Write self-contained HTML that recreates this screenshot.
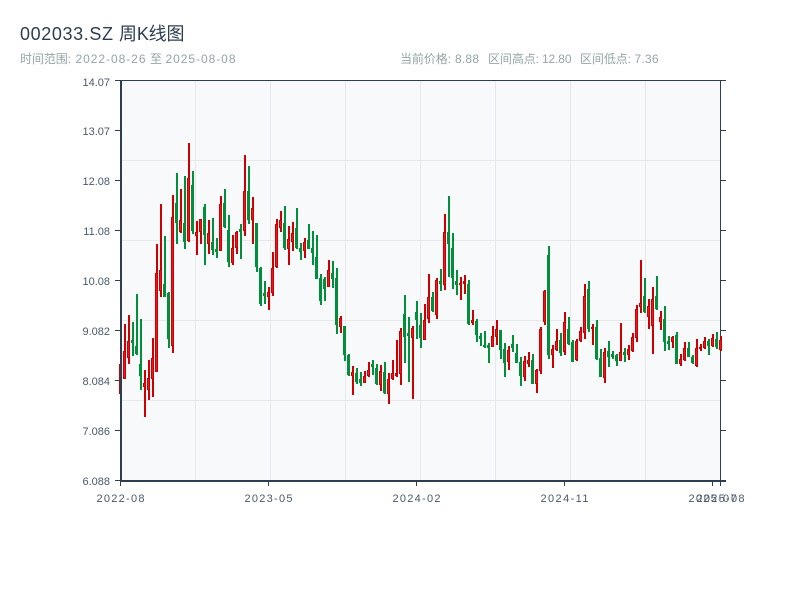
<!DOCTYPE html>
<html lang="zh">
<head>
<meta charset="utf-8">
<title>002033.SZ 周K线图</title>
<style>
html,body{margin:0;padding:0;background:#fff;width:800px;height:600px;overflow:hidden}
svg{display:block;position:absolute;left:0;top:0}
text{font-family:"Liberation Sans","Noto Sans CJK SC",sans-serif}
.s{font-size:12px;fill:#95a5a6}
.y{font-size:11px;fill:#4a5a6b;text-anchor:end}
.x{font-size:11px;fill:#4a5a6b;text-anchor:middle}
</style>
</head>
<body>
<svg width="800" height="600" viewBox="0 0 800 600" xmlns="http://www.w3.org/2000/svg">
<rect x="121" y="81" width="600" height="400" fill="#f8f9fa"/>
<path fill="none" stroke="#e6e8ec" stroke-width="1" d="M121 160.5H720M121 240.5H720M121 320.5H720M121 400.5H720M195.5 81V480M270.5 81V480M345.5 81V480M420.5 81V480M495.5 81V480M570.5 81V480M645.5 81V480"/>
<path fill="none" stroke="#2c3e50" stroke-width="1" d="M720.5 80V481M720 130.5H726M720 180.5H726M720 230.5H726M720 280.5H726M720 330.5H726M720 380.5H726M720 430.5H726"/>

<path fill="none" stroke="#cc0000" stroke-width="2" d="M121 364V394M125 324V379M129 315V364M145 370V417M149 360V400M153 338V397M157 244V372M161 204V297M173 195V353M181 189V233M189 143V242M197 221V255M201 219V244M209 220V254M221 196V251M233 235V265M237 231V254M245 155V236M253 197V244M269 287V310M273 252V296M277 219V268M281 211V232M289 226V265M293 222V251M305 238V258M329 260V287M341 316V333M353 366V395M365 371V383M369 362V377M381 365V391M389 373V404M393 360V380M397 340V377M401 328V385M413 326V399M425 304V340M429 274V323M437 278V319M445 214V290M461 277V300M465 275V294M473 310V325M493 326V347M497 320V345M509 346V370M525 356V381M529 352V367M537 369V393M541 327V374M545 290V325M553 345V368M557 329V351M565 312V355M577 339V361M581 327V342M585 284V339M593 324V345M605 348V383M621 323V361M629 345V360M633 333V352M637 305V342M641 260V313M649 299V329M653 287V354M661 311V330M673 336V348M681 354V366M685 342V361M697 339V367M701 344V351M705 337V349M713 334V347M721 336V351"/>
<path fill="none" stroke="#cc0000" stroke-width="3" d="M120.5 364V394M124.5 351V379M128.5 341V358M144.5 383V387M148.5 378V390M152.5 358V379M156.5 273V372M160.5 270V291M172.5 217V346M180.5 220V232M188.5 178V241M196.5 232V236M200.5 219V232M208.5 233V244M220.5 204V251M232.5 248V263M236.5 232V248M244.5 191V231M252.5 208V220M268.5 292V297M272.5 268V293M276.5 224V267M280.5 220V228M288.5 239V249M292.5 233V242M304.5 242V251M328.5 270V287M340.5 318V327M352.5 372V376M364.5 376V383M368.5 370V376M380.5 371V385M388.5 379V394M392.5 373V379M396.5 373V376M400.5 331V374M412.5 328V338M424.5 320V340M428.5 297V319M436.5 280V315M444.5 232V285M460.5 283V285M464.5 281V284M472.5 320V323M492.5 336V347M496.5 329V337M508.5 350V362M524.5 361V377M528.5 360V364M536.5 370V384M540.5 329V371M544.5 291V322M552.5 349V355M556.5 341V350M564.5 322V352M576.5 341V360M580.5 331V341M584.5 296V333M592.5 327V329M604.5 352V378M620.5 352V361M628.5 349V355M632.5 337V351M636.5 309V338M640.5 303V307M648.5 306V317M652.5 299V326M660.5 317V322M672.5 337V342M680.5 359V364M684.5 348V360M696.5 348V366M700.5 347V349M704.5 341V348M712.5 338V346M720.5 340V350"/>
<path fill="none" stroke="#f2131f" stroke-width="1" d="M124.5 352V378M128.5 342V357M144.5 384V386M148.5 379V389M152.5 359V378M156.5 274V371M160.5 271V290M172.5 218V345M180.5 221V231M188.5 179V240M196.5 233V235M200.5 220V231M208.5 234V243M220.5 205V250M232.5 249V262M236.5 233V247M244.5 192V230M252.5 209V219M268.5 293V296M272.5 269V292M276.5 225V266M280.5 221V227M288.5 240V248M292.5 234V241M304.5 243V250M328.5 271V286M340.5 319V326M352.5 373V375M364.5 377V382M368.5 371V375M380.5 372V384M388.5 380V393M392.5 374V378M400.5 332V373M412.5 329V337M424.5 321V339M428.5 298V318M436.5 281V314M444.5 233V284M472.5 321V322M492.5 337V346M496.5 330V336M508.5 351V361M524.5 362V376M528.5 361V363M536.5 371V383M540.5 330V370M544.5 292V321M552.5 350V354M556.5 342V349M564.5 323V351M576.5 342V359M580.5 332V340M584.5 297V332M604.5 353V377M620.5 353V360M628.5 350V354M632.5 338V350M636.5 310V337M640.5 304V306M648.5 307V316M652.5 300V325M660.5 318V321M672.5 338V341M680.5 360V363M684.5 349V359M696.5 349V365M704.5 342V347M712.5 339V345M720.5 341V349"/>

<path fill="none" stroke="#008f3a" stroke-width="2" d="M133 322V356M137 294V355M141 319V390M165 236V297M169 292V348M177 173V244M185 176V249M193 171V234M205 204V265M213 218V255M217 238V258M225 189V228M229 215V267M241 224V259M249 166V224M257 223V272M261 267V306M265 281V304M285 206V250M297 208V249M301 243V260M309 224V249M313 231V265M317 235V279M321 274V305M325 277V301M333 261V288M337 268V334M345 326V361M349 354V376M357 368V384M361 372V386M373 360V375M377 364V385M385 362V394M405 295V363M409 317V382M417 301V339M421 313V348M433 292V312M441 269V291M449 196V277M453 233V289M457 270V295M469 280V325M477 319V342M481 333V346M485 331V348M489 343V363M501 330V359M505 343V377M513 335V352M517 344V363M521 357V386M533 354V384M549 246V359M561 333V356M569 317V345M573 340V362M589 281V332M597 320V360M601 349V377M609 341V367M613 351V359M617 354V366M625 348V362M645 278V313M657 276V310M665 306V351M669 336V350M677 332V364M689 342V357M693 355V364M709 339V355M717 332V349"/>
<path fill="none" stroke="#008f3a" stroke-width="3" d="M132.5 340V343M136.5 346V354M140.5 364V376M164.5 284V297M168.5 293V339M176.5 203V223M184.5 223V242M192.5 185V231M204.5 207V235M212.5 242V250M216.5 249V252M224.5 203V227M228.5 230V262M240.5 229V232M248.5 191V220M256.5 223V267M260.5 268V304M264.5 293V296M284.5 223V248M296.5 228V248M300.5 248V252M308.5 240V249M312.5 248V253M316.5 257V279M320.5 278V301M324.5 279V289M332.5 273V279M336.5 278V325M344.5 326V355M348.5 355V375M356.5 373V382M360.5 379V383M372.5 364V367M376.5 368V384M384.5 372V393M404.5 314V337M408.5 333V336M416.5 312V320M420.5 325V338M432.5 297V311M440.5 281V284M448.5 232V244M452.5 248V278M456.5 281V285M468.5 284V324M476.5 321V335M480.5 336V339M484.5 345V347M488.5 345V348M500.5 330V350M504.5 349V363M512.5 344V348M516.5 353V363M520.5 362V376M532.5 360V384M548.5 255V355M560.5 340V353M568.5 329V344M572.5 342V362M588.5 289V329M596.5 327V359M600.5 358V377M608.5 351V357M612.5 354V357M616.5 355V361M624.5 352V355M644.5 296V312M656.5 296V309M664.5 319V342M668.5 341V344M676.5 335V364M688.5 348V357M692.5 357V363M708.5 341V346M716.5 339V347"/>

<path fill="none" stroke="#2c3e50" stroke-width="1" d="M115 80.5H726M115 130.5H120M115 180.5H120M115 230.5H120M115 280.5H120M115 330.5H120M115 380.5H120M115 430.5H120M115 480.5H120M120.5 482V486M268.5 482V486M416.5 482V486M564.5 482V486M712.5 482V486M720.5 482V486"/>
<path fill="none" stroke="#2c3e50" stroke-width="2" d="M121 80V482M120 481H726"/>

<text x="20" y="40" font-size="18" fill="#2c3e50" textLength="93" lengthAdjust="spacing">002033.SZ</text>
<text x="119" y="40" font-size="18" fill="#2c3e50" textLength="65.5" lengthAdjust="spacing">周K线图</text>

<text class="s" x="20" y="63" textLength="51" lengthAdjust="spacing">时间范围:</text>
<text class="s" x="75.5" y="63" textLength="70" lengthAdjust="spacing">2022-08-26</text>
<text class="s" x="150" y="63">至</text>
<text class="s" x="165.5" y="63" textLength="70" lengthAdjust="spacing">2025-08-08</text>
<text class="s" x="400" y="63" textLength="51" lengthAdjust="spacing">当前价格:</text>
<text class="s" x="455" y="63" textLength="24" lengthAdjust="spacing">8.88</text>
<text class="s" x="488" y="63" textLength="51" lengthAdjust="spacing">区间高点:</text>
<text class="s" x="542" y="63" textLength="29.5" lengthAdjust="spacing">12.80</text>
<text class="s" x="580" y="63" textLength="51" lengthAdjust="spacing">区间低点:</text>
<text class="s" x="634.5" y="63" textLength="24" lengthAdjust="spacing">7.36</text>

<text class="y" x="110" y="86">14.07</text>
<text class="y" x="110" y="135">13.07</text>
<text class="y" x="110" y="185">12.08</text>
<text class="y" x="110" y="235">11.08</text>
<text class="y" x="110" y="285">10.08</text>
<text class="y" x="110" y="335">9.082</text>
<text class="y" x="110" y="385">8.084</text>
<text class="y" x="110" y="435">7.086</text>
<text class="y" x="110" y="485">6.088</text>

<text class="x" x="120.5" y="502" textLength="48" lengthAdjust="spacing">2022-08</text>
<text class="x" x="268.5" y="502" textLength="48" lengthAdjust="spacing">2023-05</text>
<text class="x" x="416.5" y="502" textLength="48" lengthAdjust="spacing">2024-02</text>
<text class="x" x="564.5" y="502" textLength="48" lengthAdjust="spacing">2024-11</text>
<text class="x" x="712.5" y="502" textLength="48" lengthAdjust="spacing">2025-07</text>
<text class="x" x="720.5" y="502" textLength="48" lengthAdjust="spacing">2025-08</text>
</svg>
</body>
</html>
